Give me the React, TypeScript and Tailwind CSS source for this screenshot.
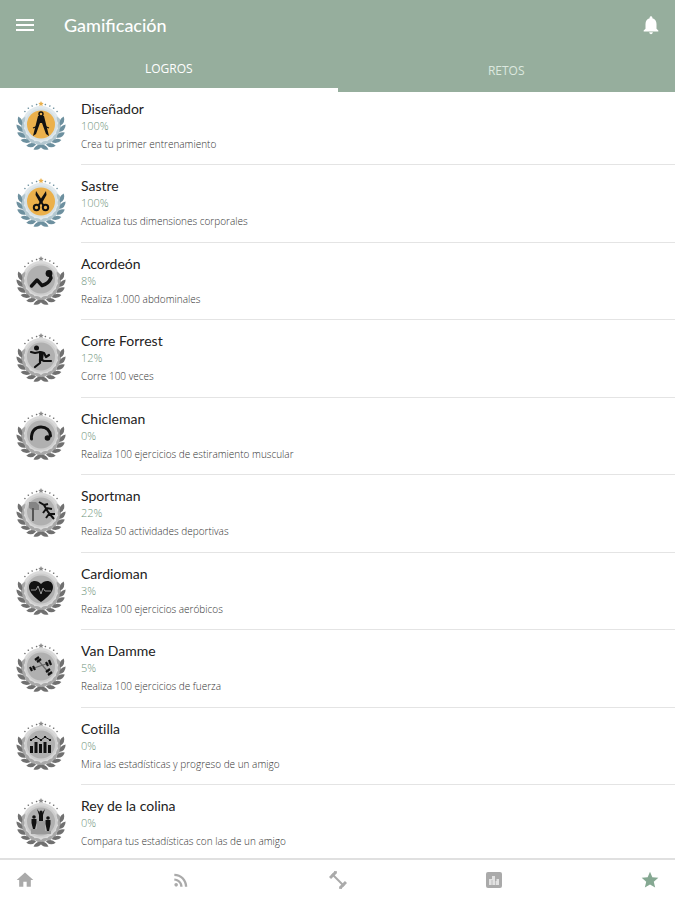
import { useState } from 'react'
import type { ReactNode } from 'react'
import clsx from 'clsx'
import { MdHome, MdMenu, MdNotifications, MdRssFeed, MdStar } from 'react-icons/md'

interface Achievement {
  name: string
  progress: number
  description: string
  glyph: ReactNode
}

const achievements: Achievement[] = [
  {
    name: 'Diseñador',
    progress: 100,
    description: 'Crea tu primer entrenamiento',
    glyph: (
      <>
        <circle cx="26" cy="14" r="2" fill="none" stroke="#111" strokeWidth="1.4" />
        <path d="M23 16h6l1 4 4 16-3-2-4-11h-2l-4 11-3 2 4-16z" />
        <path d="M18 28l5-2M29 26l5 2" stroke="#111" strokeWidth="1.2" />
      </>
    ),
  },
  {
    name: 'Sastre',
    progress: 100,
    description: 'Actualiza tus dimensiones corporales',
    glyph: (
      <>
        <path d="M21 14l5 7.5 5-7.5.5 4-4 7 2 3.5-1.5 1-2-3-2 3-1.5-1 2-3.5-4-7z" />
        <g fill="none" stroke="#111" strokeWidth="2">
          <circle cx="21.5" cy="30.5" r="2.7" />
          <circle cx="30.5" cy="30.5" r="2.7" />
        </g>
      </>
    ),
  },
  {
    name: 'Acordeón',
    progress: 8,
    description: 'Realiza 1.000 abdominales',
    glyph: (
      <>
        <path
          d="M16.5 31l5.500-6 5 5.500c4-1 7.500-4 9-7.500l-1-3"
          fill="none"
          stroke="#111"
          strokeWidth="3.4"
          strokeLinecap="round"
          strokeLinejoin="round"
        />
        <circle cx="34" cy="18.5" r="3.4" />
      </>
    ),
  },
  {
    name: 'Corre Forrest',
    progress: 12,
    description: 'Corre 100 veces',
    glyph: (
      <>
        <circle cx="21.5" cy="16" r="2.5" />
        <path
          d="M16 20l4 1 5-1 4 1 2 4 3-2M27 22l-2 5 4 2 7 0M25 27l0 4-5 4"
          fill="none"
          stroke="#111"
          strokeWidth="2.2"
          strokeLinecap="round"
          strokeLinejoin="round"
        />
        <path d="M24 19l5 1-1 8-4-1z" />
      </>
    ),
  },
  {
    name: 'Chicleman',
    progress: 0,
    description: 'Realiza 100 ejercicios de estiramiento muscular',
    glyph: (
      <>
        <path
          d="M16.5 29c-.5-8 4-12 9.500-12s9 3.500 9.500 9"
          fill="none"
          stroke="#111"
          strokeWidth="3"
          strokeLinecap="round"
        />
        <circle cx="32.5" cy="28" r="2.8" />
      </>
    ),
  },
  {
    name: 'Sportman',
    progress: 22,
    description: 'Realiza 50 actividades deportivas',
    glyph: (
      <>
        <path d="M14 15h7l3 3v5h-7l-3-2z" fill="#858585" />
        <path d="M18 21v13" stroke="#555" strokeWidth="2" />
        <path
          d="M24 15l5 3 4 7 6 7M29 18l4-1M31 22l-3 4M31 21l6 1M34 27l-3 4M35 27l5 0"
          fill="none"
          stroke="#111"
          strokeWidth="2"
        />
      </>
    ),
  },
  {
    name: 'Cardioman',
    progress: 3,
    description: 'Realiza 100 ejercicios aeróbicos',
    glyph: (
      <>
        <path d="M26 37C19 32 14 27 14 22c0-7 8-8 12-3 4-5 12-4 12 3 0 5-5 10-12 15z" />
        <path d="M16 25h5l2-4 3 8 2-6 2 3h6" fill="none" stroke="#999" strokeWidth="1" />
      </>
    ),
  },
  {
    name: 'Van Damme',
    progress: 5,
    description: 'Realiza 100 ejercicios de fuerza',
    glyph: (
      <>
        <path d="M22 17l12 14M16 27l18-6" stroke="#666" strokeWidth="1.2" />
        <path
          d="M20 18l4-3M22 20l4-3M31 30l4-3M33 33l4-3M15 25l2 4M18 24l2 4M31 20l2 4M34 18l2 5"
          stroke="#111"
          strokeWidth="2.2"
        />
      </>
    ),
  },
  {
    name: 'Cotilla',
    progress: 0,
    description: 'Mira las estadísticas y progreso de un amigo',
    glyph: (
      <>
        <path d="M15 26h3v7h-3zM19.5 22h3v11h-3zM24 24h3v9h-3zM28.5 22h3v11h-3zM33 25h3v8h-3z" />
        <path d="M16 20l5-3 5 3 4-3 5 3" fill="none" stroke="#111" strokeWidth="1" />
        <path d="M15 19h2v2h-2zM20 16h2v2h-2zM25 19h2v2h-2zM29 16h2v2h-2zM34 19h2v2h-2z" />
      </>
    ),
  },
  {
    name: 'Rey de la colina',
    progress: 0,
    description: 'Compara tus estadísticas con las de un amigo',
    glyph: (
      <>
        <path d="M16 32h6v-8h8v10h6v3H16z" fill="#999" />
        <circle cx="26" cy="15" r="1.6" />
        <circle cx="19" cy="20" r="1.8" />
        <circle cx="33" cy="21" r="1.8" />
        <path d="M22 12l3 4h2l3-4-2 6v6h-4v-6zM16.5 22h5v4l-1.500 6h-2l-1.500-6zM30.5 23h5v4l-1.500 7h-2l-1.500-7z" />
      </>
    ),
  },
]

const leafAngles = [8, 27, 46, 65, 84, 103]
const dotAngles = [-50, -37, -25, -12, 12, 25, 37, 50]

function Branch({ dark, light }: { dark: string; light: string }) {
  return (
    <>
      {leafAngles.map((angle) => {
        const rad = (angle * Math.PI) / 180
        const x = Math.sin(rad)
        const y = Math.cos(rad)
        return (
          <g key={angle}>
            <path
              d="M-4 0Q0-3.600 5 0Q0 3.600-4 0z"
              fill={light}
              transform={`translate(${26 + 18.5 * x} ${25 + 18.5 * y}) rotate(${-angle - 15})`}
            />
            <path
              d="M-5 0Q0-4.200 5 0Q0 4.200-5 0z"
              fill={dark}
              transform={`translate(${26 + 21.5 * x} ${26 + 21.5 * y}) rotate(${-angle + 34})`}
            />
          </g>
        )
      })}
    </>
  )
}

function Medal({ earned, children }: { earned: boolean; children: ReactNode }) {
  const dark = earned ? '#6d909f' : '#707070'
  const light = earned ? '#b4c8d0' : '#a8a8a8'

  return (
    <svg viewBox="0 0 52 52" className="size-[52px] shrink-0" aria-hidden="true">
      <circle cx="26" cy="25" r="19" fill={earned ? '#e1e9ed' : '#dadada'} />
      <Branch dark={dark} light={light} />
      <g transform="translate(52 0) scale(-1 1)">
        <Branch dark={dark} light={light} />
      </g>
      <circle cx="26" cy="24.5" r="16" fill={earned ? '#d5e0e5' : '#cdcdcd'} />
      {dotAngles.map((angle) => (
        <circle key={angle} cx="26" cy="4" r="0.8" fill={dark} transform={`rotate(${angle} 26 25)`} />
      ))}
      <path
        d="M26 1l.8 1.700 1.900.2-1.400 1.300.4 1.900-1.700-.9-1.700.9.4-1.900-1.400-1.300 1.900-.2z"
        fill={earned ? '#e9b04c' : '#8a8a8a'}
      />
      <circle cx="26" cy="24.5" r="14" fill={earned ? '#ebb04b' : '#b0b0b0'} />
      <g fill="#111">{children}</g>
    </svg>
  )
}

function DumbbellIcon() {
  return (
    <svg viewBox="0 0 18 18" className="size-[18px]" fill="none" stroke="currentColor" aria-hidden="true">
      <path d="M3 3l12 12" strokeWidth="2" />
      <path d="M1 7l6-6M11 17l6-6" strokeWidth="3" />
      <path d="M5 1h3M10 17h3" strokeWidth="1.4" />
    </svg>
  )
}

function StatsIcon() {
  return (
    <svg viewBox="0 0 16 16" className="size-4" aria-hidden="true">
      <rect width="16" height="16" rx="2" fill="currentColor" />
      <path d="M3 13V7h3V4h3v5h1.500V7H13v6z" fill="#e2e2e2" />
      <path d="M6 8v5M9.5 9v4" stroke="currentColor" strokeWidth="0.6" />
    </svg>
  )
}

const navItems = [
  { label: 'Inicio', icon: <MdHome size={20} /> },
  { label: 'Noticias', icon: <MdRssFeed size={20} /> },
  { label: 'Entrenamiento', icon: <DumbbellIcon /> },
  { label: 'Estadísticas', icon: <StatsIcon /> },
  { label: 'Gamificación', icon: <MdStar size={20} />, active: true },
]

function AchievementRow({ achievement }: { achievement: Achievement }) {
  const { name, progress, description, glyph } = achievement

  return (
    <li className="flex h-[77px] pl-[15px] even:h-[78px]">
      <div className="pt-3">
        <Medal earned={progress >= 100}>{glyph}</Medal>
      </div>
      <div className="ml-[14px] flex-1 border-b border-[#e4e4e4] pt-[11px]">
        <h2 className="font-['Lato',sans-serif] text-[14px] leading-5 text-[#222] [font-variant-ligatures:none]">
          {name}
        </h2>
        <p className="text-[11px] leading-[14px] font-light text-[#6f957c]">{progress}%</p>
        <p className="mt-1 text-[10px] leading-[14px] font-light text-[#333]">{description}</p>
      </div>
    </li>
  )
}

export default function App() {
  const [tab, setTab] = useState('LOGROS')

  return (
    <div className="flex h-screen flex-col bg-white font-['Open_Sans',sans-serif]">
      <header className="bg-[#96ae9d] text-white">
        <div className="flex h-[50px] items-center px-[13px]">
          <button aria-label="Menú">
            <MdMenu size={24} />
          </button>
          <h1 className="ml-[27px] flex-1 font-['Lato',sans-serif] text-[18px] leading-6 font-medium">Gamificación</h1>
          <button aria-label="Notificaciones">
            <MdNotifications size={22} />
          </button>
        </div>
        <div role="tablist" className="grid h-[42px] grid-cols-2 text-[12px]">
          {['LOGROS', 'RETOS'].map((label) => (
            <button
              key={label}
              role="tab"
              aria-selected={tab === label}
              onClick={() => setTab(label)}
              className={clsx(tab === label ? 'border-b-4 border-white' : 'text-[#dce8df]')}
            >
              {label}
            </button>
          ))}
        </div>
      </header>

      <main className="-mt-1 flex-1 overflow-y-auto [scrollbar-width:none]">
        <ul>
          {achievements.map((achievement) => (
            <AchievementRow key={achievement.name} achievement={achievement} />
          ))}
        </ul>
      </main>

      <nav className="flex h-[42px] shrink-0 items-center justify-between border-t-2 border-[#e0e0e0] bg-white px-[15px] text-[#aaa]">
        {navItems.map(({ label, icon, active }) => (
          <a
            key={label}
            href="#"
            aria-label={label}
            className={clsx('flex w-5 justify-center', active && 'text-[#85a892]')}
          >
            {icon}
          </a>
        ))}
      </nav>
    </div>
  )
}
